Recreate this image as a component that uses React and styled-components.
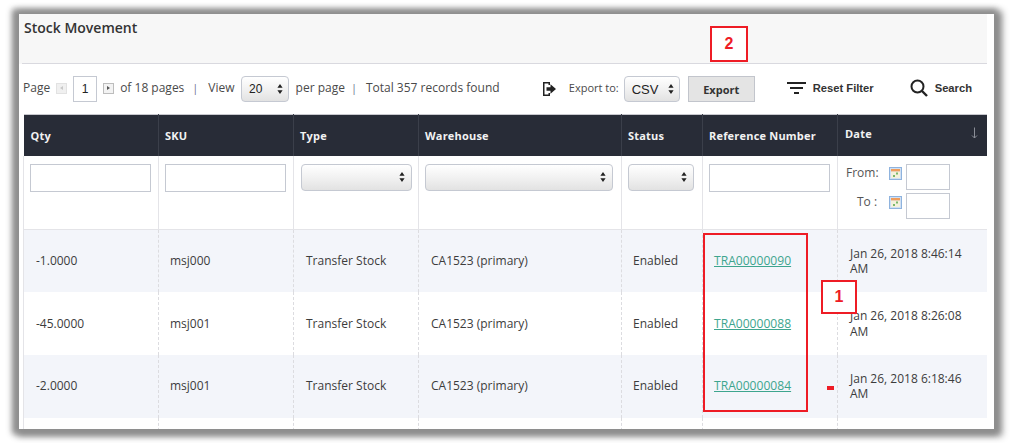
import React from 'react';
import styled, { createGlobalStyle } from 'styled-components';

const Global = createGlobalStyle`
  html, body { margin: 0; padding: 0; background: #fff; }
  body { width: 1014px; height: 443px; overflow: hidden; font-family: "Open Sans", sans-serif; color: #333; }
`;
const Frame = styled.div`
  position: relative;
  box-sizing: border-box;
  width: 975px;
  height: 415px;
  margin: 14px 0 0 19px;
  padding-right: 7px;
  background: #fff;
  box-shadow: -2px 0 6px 5px #8f8f8f, 3px 2px 7px 5px #8a8a8a;
`;
const Clip = styled.div`
  height: 415px;
  overflow: hidden;
`;
const TitleBar = styled.header`
  box-sizing: border-box;
  height: 50px;
  padding: 4px 0 0 5px;
  background: linear-gradient(#d9d9df, #d9d9df) 3px 100% / 100% 1px no-repeat, #f7f7f7;
`;
const Title = styled.h1`
  margin: 0;
  font-size: 14px;
  line-height: 19px;
  font-weight: 600;
  color: #333;
`;
const Toolbar = styled.div`
  display: flex;
  align-items: center;
  justify-content: space-between;
  height: 50px;
  padding: 0 15px 0 4px;
  font-size: 12px;
  color: #4a4a4a;
`;
const Group = styled.div`
  display: flex;
  align-items: center;
  gap: ${p => p.$gap}px;
`;
const Text = styled.span`
  padding-bottom: 4px;
  font-size: ${p => p.$size || 12}px;
  white-space: nowrap;
`;
const PageStep = styled.span`
  box-sizing: border-box;
  display: inline-flex;
  align-items: center;
  justify-content: center;
  width: 11px;
  height: 11px;
  margin-bottom: 2px;
  background: ${p => (p.$off ? '#f0f0f0' : '#f3f3f3')};
  border: 1px solid ${p => (p.$off ? '#e2e2e2' : '#bdbdbd')};
  &::after {
    content: '';
    border-style: solid;
    border-width: ${p => (p.$off ? '2px 3px 2px 0' : '2px 0 2px 3px')};
    border-color: transparent ${p => (p.$off ? '#c8c8c8' : 'transparent')} transparent ${p => (p.$off ? 'transparent' : '#555')};
  }
`;
const PageInput = styled.div`
  box-sizing: border-box;
  width: 24px;
  height: 26px;
  border: 1px solid #c5c9d2;
  font-family: "Liberation Sans", sans-serif;
  font-size: 12px;
  line-height: 25px;
  text-align: center;
  color: #222;
`;
const Sep = styled.span`
  width: 6px;
  padding: 0 ${p => p.$r}px 4px ${p => p.$l}px;
  text-align: center;
  color: #6b7390;
  font-size: 11px;
`;
const NativeSelect = styled.div`
  box-sizing: border-box;
  display: flex;
  align-items: center;
  justify-content: space-between;
  width: ${p => p.$w}px;
  height: ${p => p.$h || 26}px;
  padding: 0 ${p => p.$pr || 5}px 0 7px;
  border: 1px solid #c5c9d2;
  border-radius: 4px;
  background: linear-gradient(to bottom, #ffffff 0%, #f0f0f0 55%, #e2e2e2 100%);
  font-family: "Liberation Sans", sans-serif;
  font-size: ${p => p.$fs || 12}px;
  color: #222;
`;
const Chevrons = () => (
  <svg width="6" height="10" viewBox="0 0 6 10" fill="#222">
    <path d="M3 0 L5.6 3.8 H0.4 Z M3 10 L0.4 6.2 H5.6 Z" />
  </svg>
);
const ExportIcon = styled.svg`
  margin-right: 7px;
`;
const ExportButton = styled.button`
  box-sizing: border-box;
  width: 67px;
  height: 26px;
  margin-left: 3px;
  padding: 0;
  background: #e4e4e4;
  border: 1px solid #c2c5cc;
  font-family: "Open Sans", sans-serif;
  font-size: 11px;
  font-weight: 700;
  color: #333;
`;
const ToolAction = styled.span`
  display: inline-flex;
  align-items: center;
  gap: 7px;
  padding-bottom: 2px;
  font-family: "Liberation Sans", sans-serif;
  font-size: 11.2px;
  font-weight: 700;
  color: #333;
`;
const Table = styled.table`
  width: 964px;
  margin-left: 4px;
  border-collapse: collapse;
  table-layout: fixed;
`;
const HeadRow = styled.tr`
  height: 41px;
  background: #282c37;
  border-top: 1px solid #c8c8ce;
`;
const Th = styled.th`
  padding: 0 0 0 6px;
  text-align: left;
  font-size: 11px;
  font-weight: 700;
  letter-spacing: 0.2px;
  color: #f2f2f2;
  border-left: 1px solid #3b3f4a;
  &:first-child { border-left: 0; padding-left: 7px; }
  &:last-child { padding-left: 7px; }
`;
const DateHead = styled.div`
  display: flex;
  align-items: center;
  justify-content: space-between;
  padding: 0 10px 4px 0;
`;
const FilterRow = styled.tr`
  height: 74px;
  border-bottom: 1px solid #e4e4e8;
`;
const FilterCell = styled.td`
  padding: 8px 0 0 ${p => p.$pl || 6}px;
  vertical-align: top;
  border-left: 1px solid #e4e4e8;
`;
const TextBox = styled.div`
  box-sizing: border-box;
  width: ${p => p.$w}px;
  height: ${p => p.$h || 28}px;
  border: 1px solid #c5c9d2;
  background: #fff;
`;
const DateFilter = styled.div`
  display: grid;
  grid-template-columns: 44px 17px 44px;
  row-gap: 3px;
  align-items: start;
  font-size: 12px;
  color: #555;
`;
const DateLabel = styled.span`
  padding-left: ${p => (p.$center ? 0 : 1)}px;
  line-height: 17px;
  text-align: ${p => (p.$center ? 'center' : 'left')};
`;
const CalSvg = styled.svg`
  margin-top: 3px;
`;
const CalIcon = () => (
  <CalSvg width="13" height="13" viewBox="0 0 13 13">
    <rect x="0.5" y="0.5" width="12" height="12" fill="#cfe0f4" stroke="#8fb3de" />
    <rect x="2" y="2" width="9" height="2.6" fill="#ef9d5d" />
    <rect x="2" y="4.6" width="9" height="6.4" fill="#f4f1dc" />
    <rect x="7" y="5.5" width="2" height="2" fill="#79b86a" />
    <rect x="4" y="8" width="2" height="2" fill="#79b86a" />
  </CalSvg>
);
const Row = styled.tr`
  height: 62.7px;
  background: ${p => (p.$tint ? '#f3f5fa' : '#fff')};
`;
const Td = styled.td`
  padding: 0 6px 0 ${p => p.$pl || 11}px;
  font-size: 12px;
  line-height: 15.5px;
  color: #3c3c3c;
  border-left: 1px dashed #dcdce0;
  &:first-child { border-left: 1px solid #e4e4e8; padding-left: 12px; }
  &:last-child { border-right: 1px solid #e4e4e8; padding-left: 12px; }
`;
const RefLink = styled.a`
  color: #3da58e;
  text-decoration: underline;
  font-size: 12.1px;
`;
const Callout = styled.div`
  position: absolute;
  box-sizing: border-box;
  display: flex;
  align-items: center;
  justify-content: center;
  left: ${p => p.$x}px;
  top: ${p => p.$y}px;
  width: ${p => p.$w}px;
  height: ${p => p.$h}px;
  border: 2px solid #ee1c25;
  background: ${p => (p.$fill ? '#fff' : 'transparent')};
  font-family: "Liberation Sans", sans-serif;
  font-size: 16px;
  font-weight: 700;
  color: #ee1c25;
`;
const Dash = styled.div`
  position: absolute;
  left: 808px;
  top: 372px;
  width: 7px;
  height: 4px;
  background: #ee1c25;
`;

const COLS = [135, 135, 125, 203, 81, 135, 150];
const rows = [
  ['-1.0000', 'msj000', 'TRA00000090', 'Jan 26, 2018 8:46:14 AM', true],
  ['-45.0000', 'msj001', 'TRA00000088', 'Jan 26, 2018 8:26:08 AM', false],
  ['-2.0000', 'msj001', 'TRA00000084', 'Jan 26, 2018 6:18:46 AM', true],
  ['', '', '', '', false],
];

export default function App() {
  return (
    <>
      <Global />
      <Frame>
        <Clip>
          <TitleBar><Title>Stock Movement</Title></TitleBar>
          <Toolbar>
            <Group $gap={0}>
              <Group $gap={6}>
                <Text>Page</Text>
                <PageStep $off />
                <PageInput>1</PageInput>
                <PageStep />
                <Text>of 18 pages</Text>
              </Group>
              <Sep $l={8} $r={10}>|</Sep>
              <Group $gap={6.5}>
                <Text>View</Text>
                <NativeSelect $w={48}>20<Chevrons /></NativeSelect>
                <Text>per page</Text>
              </Group>
              <Sep $l={6} $r={9}>|</Sep>
              <Text>Total 357 records found</Text>
            </Group>
            <Group $gap={32}>
              <Group $gap={5}>
                <ExportIcon width="15" height="16" viewBox="0 0 15 16" fill="#222">
                  <path d="M1 1 H8 V4 H6.5 V2.5 H2.5 V13.5 H6.5 V12 H8 V15 H1 Z" />
                  <path d="M4.5 6.3 H8.5 V3.3 L14 8 L8.5 12.7 V9.7 H4.5 Z" />
                </ExportIcon>
                <Text $size={11}>Export to:</Text>
                <NativeSelect $w={56} $fs={13}>CSV<Chevrons /></NativeSelect>
                <ExportButton>Export</ExportButton>
              </Group>
              <Group $gap={36}>
                <ToolAction>
                  <svg width="19" height="14" viewBox="0 0 19 14" fill="#222">
                    <rect x="0" y="1" width="19" height="2" />
                    <rect x="3" y="6" width="13" height="2" />
                    <rect x="7" y="11" width="5" height="2" />
                  </svg>
                  Reset Filter
                </ToolAction>
                <ToolAction>
                  <svg width="18" height="18" viewBox="0 0 18 18" fill="none" stroke="#222" strokeWidth="2">
                    <circle cx="7.5" cy="7.5" r="6" />
                    <path d="M12 12 L17 17" strokeWidth="2.4" />
                  </svg>
                  Search
                </ToolAction>
              </Group>
            </Group>
          </Toolbar>
          <Table>
            <colgroup>
              {COLS.map((w, i) => <col key={i} style={{ width: w }} />)}
            </colgroup>
            <thead>
              <HeadRow>
                <Th>Qty</Th>
                <Th>SKU</Th>
                <Th>Type</Th>
                <Th>Warehouse</Th>
                <Th>Status</Th>
                <Th>Reference Number</Th>
                <Th>
                  <DateHead>
                    Date
                    <svg width="7" height="12" viewBox="0 0 7 12" fill="none" stroke="#8b8e97" strokeWidth="1">
                      <path d="M3.5 0.5 V11 M1 8.5 L3.5 11 L6 8.5" />
                    </svg>
                  </DateHead>
                </Th>
              </HeadRow>
            </thead>
            <tbody>
              <FilterRow>
                <FilterCell><TextBox $w={121} /></FilterCell>
                <FilterCell><TextBox $w={121} /></FilterCell>
                <FilterCell $pl={7}><NativeSelect $w={111} $h={27} $pr={6}><span /><Chevrons /></NativeSelect></FilterCell>
                <FilterCell><NativeSelect $w={188} $h={27} $pr={6}><span /><Chevrons /></NativeSelect></FilterCell>
                <FilterCell><NativeSelect $w={66} $h={27} $pr={6}><span /><Chevrons /></NativeSelect></FilterCell>
                <FilterCell><TextBox $w={121} /></FilterCell>
                <FilterCell $pl={7}>
                  <DateFilter>
                    <DateLabel>From:</DateLabel><CalIcon /><TextBox $w={44} $h={26} />
                    <DateLabel $center>To :</DateLabel><CalIcon /><TextBox $w={44} $h={26} />
                  </DateFilter>
                </FilterCell>
              </FilterRow>
              {rows.map((r, i) => (
                <Row key={i} $tint={r[4]}>
                  <Td>{r[0]}</Td>
                  <Td>{r[1]}</Td>
                  <Td $pl={12}>{r[0] && 'Transfer Stock'}</Td>
                  <Td $pl={12}>{r[0] && 'CA1523 (primary)'}</Td>
                  <Td>{r[0] && 'Enabled'}</Td>
                  <Td><RefLink href="#">{r[2]}</RefLink></Td>
                  <Td>{r[3]}</Td>
                </Row>
              ))}
            </tbody>
          </Table>
        </Clip>
        <Callout $x={691} $y={12} $w={38} $h={36} $fill>2</Callout>
        <Callout $x={684} $y={219} $w={105} $h={179} />
        <Callout $x={802} $y={266} $w={36} $h={34} $fill>1</Callout>
        <Dash />
      </Frame>
    </>
  );
}
